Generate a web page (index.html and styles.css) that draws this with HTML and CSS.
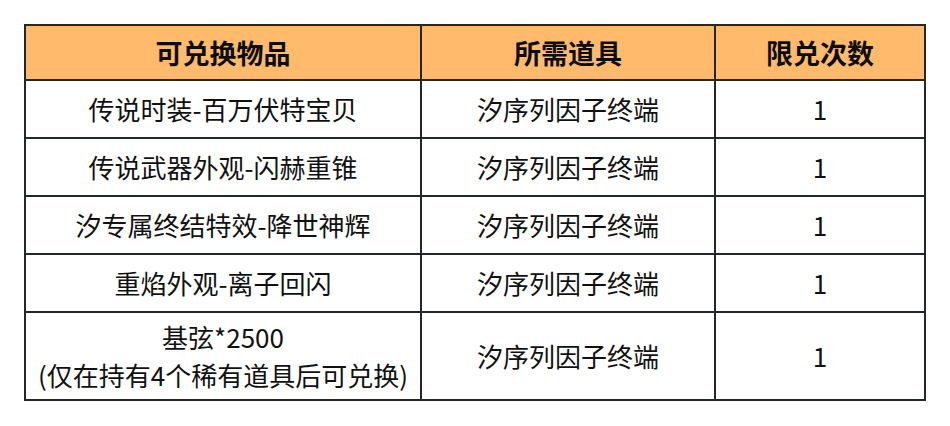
FILE: index.html
```html
<!DOCTYPE html>
<html lang="zh-CN">
<head>
<meta charset="utf-8">
<title>兑换列表</title>
<link rel="stylesheet" href="styles.css">
</head>
<body>
<table class="exchange">
  <colgroup>
    <col class="c-item">
    <col class="c-need">
    <col class="c-limit">
  </colgroup>
  <thead>
    <tr class="head-row">
      <th>可兑换物品</th>
      <th>所需道具</th>
      <th>限兑次数</th>
    </tr>
  </thead>
  <tbody>
    <tr class="row">
      <td>传说时装-百万伏特宝贝</td>
      <td>汐序列因子终端</td>
      <td class="num">1</td>
    </tr>
    <tr class="row">
      <td>传说武器外观-闪赫重锥</td>
      <td>汐序列因子终端</td>
      <td class="num">1</td>
    </tr>
    <tr class="row">
      <td>汐专属终结特效-降世神辉</td>
      <td>汐序列因子终端</td>
      <td class="num">1</td>
    </tr>
    <tr class="row">
      <td>重焰外观-离子回闪</td>
      <td>汐序列因子终端</td>
      <td class="num">1</td>
    </tr>
    <tr class="row row-tall">
      <td>基弦*2500<br>(仅在持有4个稀有道具后可兑换)</td>
      <td>汐序列因子终端</td>
      <td class="num">1</td>
    </tr>
  </tbody>
</table>
</body>
</html>
```

FILE: styles.css
```css
html, body {
  margin: 0;
  padding: 0;
  background: #ffffff;
}

body {
  font-family: "Noto Sans CJK SC", "Noto Sans", sans-serif;
  color: #111111;
}

.exchange {
  margin: 24px 0 0 24px;
  width: 902px;
  table-layout: fixed;
  border-collapse: separate;
  border-spacing: 0;
  border: 2px solid #23262b;
}

.c-item { width: 396px; }
.c-need { width: 294px; }
.c-limit { width: 208px; }

.exchange th,
.exchange td {
  padding: 0;
  text-align: center;
  vertical-align: middle;
  border-right: 2px solid #23262b;
  box-sizing: border-box;
}

.exchange th:last-child,
.exchange td:last-child {
  border-right: none;
}

.exchange td {
  border-top: 2px solid #23262b;
  font-size: 26px;
  font-weight: 400;
  line-height: 38px;
}

.head-row th {
  background: #ffbb6b;
  height: 53px;
  font-size: 27px;
  font-weight: 700;
  line-height: 53px;
  color: #0d0d0d;
}

.row td {
  height: 58px;
}

.row-tall td {
  height: 88px;
}
```
